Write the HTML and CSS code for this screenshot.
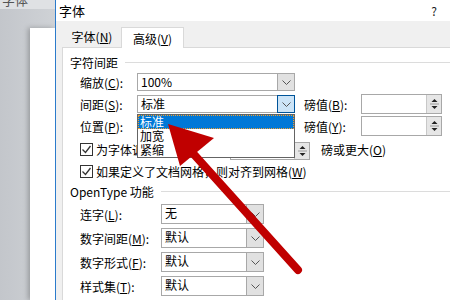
FILE: index.html
```html
<!DOCTYPE html>
<html lang="zh-CN">
<head>
  <meta charset="UTF-8">
  <title>字体</title>
  <link rel="stylesheet" href="styles.css">
</head>
<body>
  <div class="screen">
    <div class="backdrop">
      <div class="ribbon"><span class="ribbon-text">字体</span></div>
      <div class="doc-area"><div class="page"></div></div>
    </div>

    <div class="dialog">
      <div class="titlebar">
        <span class="title">字体</span>
        <span class="help">?</span>
      </div>
      <div class="tabs">
        <div class="tab">字体(<u>N</u>)</div>
        <div class="tab active">高级(<u>V</u>)</div>
      </div>
      <div class="body">
        <div class="panel">
          <div class="group-head"><span>字符间距</span><i class="rule"></i></div>

          <div class="row">
            <span class="lbl w1">缩放(<u>C</u>):</span>
            <div class="combo c1"><span class="val">100%</span><span class="drop"><svg width="9" height="5" viewBox="0 0 9 5"><path d="M0.5 0.5 L4.5 4.5 L8.5 0.5" fill="none" stroke="#555" stroke-width="1"/></svg></span></div>
          </div>

          <div class="row">
            <span class="lbl w1">间距(<u>S</u>):</span>
            <div class="combo c1"><span class="val">标准</span><span class="drop focus"><svg width="9" height="5" viewBox="0 0 9 5"><path d="M0.5 0.5 L4.5 4.5 L8.5 0.5" fill="none" stroke="#555" stroke-width="1"/></svg></span></div>
            <span class="lbl w2">磅值(<u>B</u>):</span>
            <div class="spin s1"><span class="val"></span><span class="arrows"><svg width="13" height="16" viewBox="0 0 13 16"><path d="M3.5 6 L6.5 3 L9.5 6 Z" fill="#222"/><line x1="2" y1="8" x2="11" y2="8" stroke="#9a9a9a"/><path d="M3.5 10 L9.5 10 L6.5 13 Z" fill="#222"/></svg></span></div>
          </div>

          <div class="row">
            <span class="lbl w1">位置(<u>P</u>):</span>
            <div class="combo c1"><span class="val"></span><span class="drop"><svg width="9" height="5" viewBox="0 0 9 5"><path d="M0.5 0.5 L4.5 4.5 L8.5 0.5" fill="none" stroke="#555" stroke-width="1"/></svg></span></div>
            <span class="lbl w2">磅值(<u>Y</u>):</span>
            <div class="spin s1"><span class="val"></span><span class="arrows"><svg width="13" height="16" viewBox="0 0 13 16"><path d="M3.5 6 L6.5 3 L9.5 6 Z" fill="#222"/><line x1="2" y1="8" x2="11" y2="8" stroke="#9a9a9a"/><path d="M3.5 10 L9.5 10 L6.5 13 Z" fill="#222"/></svg></span></div>
          </div>

          <div class="row cb-row first">
            <span class="check"><svg width="11" height="11" viewBox="0 0 11 11"><path d="M1.5 5.5 L4.5 8.5 L9.5 2" fill="none" stroke="#333" stroke-width="1.3"/></svg></span>
            <span class="cb-text">为字体调整字间距(<u>K</u>):</span>
            <div class="spin s2"><span class="val">1</span><span class="arrows"><svg width="13" height="16" viewBox="0 0 13 16"><path d="M3.5 6 L6.5 3 L9.5 6 Z" fill="#222"/><line x1="2" y1="8" x2="11" y2="8" stroke="#9a9a9a"/><path d="M3.5 10 L9.5 10 L6.5 13 Z" fill="#222"/></svg></span></div>
            <span class="after">磅或更大(<u>O</u>)</span>
          </div>

          <div class="row cb-row">
            <span class="check"><svg width="11" height="11" viewBox="0 0 11 11"><path d="M1.5 5.5 L4.5 8.5 L9.5 2" fill="none" stroke="#333" stroke-width="1.3"/></svg></span>
            <span>如果定义了文档网格，则对齐到网格(<u>W</u>)</span>
          </div>

          <div class="group-head second"><span>OpenType 功能</span><i class="rule"></i></div>

          <div class="row ot">
            <span class="lbl w3">连字(<u>L</u>):</span>
            <div class="combo c2"><span class="val">无</span><span class="drop"><svg width="9" height="5" viewBox="0 0 9 5"><path d="M0.5 0.5 L4.5 4.5 L8.5 0.5" fill="none" stroke="#555" stroke-width="1"/></svg></span></div>
          </div>
          <div class="row ot">
            <span class="lbl w3">数字间距(<u>M</u>):</span>
            <div class="combo c2"><span class="val">默认</span><span class="drop"><svg width="9" height="5" viewBox="0 0 9 5"><path d="M0.5 0.5 L4.5 4.5 L8.5 0.5" fill="none" stroke="#555" stroke-width="1"/></svg></span></div>
          </div>
          <div class="row ot">
            <span class="lbl w3">数字形式(<u>F</u>):</span>
            <div class="combo c2"><span class="val">默认</span><span class="drop"><svg width="9" height="5" viewBox="0 0 9 5"><path d="M0.5 0.5 L4.5 4.5 L8.5 0.5" fill="none" stroke="#555" stroke-width="1"/></svg></span></div>
          </div>
          <div class="row ot">
            <span class="lbl w3">样式集(<u>T</u>):</span>
            <div class="combo c2"><span class="val">默认</span><span class="drop"><svg width="9" height="5" viewBox="0 0 9 5"><path d="M0.5 0.5 L4.5 4.5 L8.5 0.5" fill="none" stroke="#555" stroke-width="1"/></svg></span></div>
          </div>
        </div>
      </div>
    </div>

    <!-- open list of the 间距 combo -->
    <div class="droplist">
      <div class="item selected">标准</div>
      <div class="item">加宽</div>
      <div class="item">紧缩</div>
    </div>

    <svg class="arrow" width="450" height="300" viewBox="0 0 450 300">
      <line x1="298" y1="270" x2="190" y2="150" stroke="#c00000" stroke-width="8" stroke-linecap="round"/>
      <polygon points="168,124 214,138 180,166" fill="#c00000"/>
    </svg>
  </div>
</body>
</html>
```

FILE: styles.css
```css
body {
  margin: 0;
  font-family: "Noto Sans CJK SC", "Noto Sans", sans-serif;
  font-size: 12px;
  color: #000;
}
u {
  text-decoration: underline;
  text-underline-offset: 1px;
}
.screen {
  position: relative;
  width: 450px;
  height: 300px;
  overflow: hidden;
  display: flex;
}

/* word window behind the dialog */
.backdrop {
  width: 55px;
  display: flex;
  flex-direction: column;
  background-color: #c8cbd0;
}
.ribbon {
  height: 9px;
  background-color: #dfe1e4;
  overflow: hidden;
  padding-left: 2px;
}
.ribbon-text {
  display: block;
  margin-top: -8px;
  font-size: 13px;
  line-height: 16px;
  color: #555;
}
.doc-area {
  flex: 1;
  padding-top: 19px;
  padding-left: 30px;
  background: linear-gradient(90deg, #c3c6cb, #cfd2d6);
}
.page {
  height: 100%;
  background-color: #fff;
  box-shadow: -2px 0 5px rgba(0,0,0,0.25);
}

/* dialog */
.dialog {
  flex: 1;
  border-left: 1px solid #2b7bcb;
  display: flex;
  flex-direction: column;
  background-color: #f0f0f0;
}
.titlebar {
  height: 21px;
  background-color: #fff;
  display: flex;
  align-items: center;
  justify-content: space-between;
  padding: 0 13px 0 3px;
}
.title {
  font-size: 13px;
}
.help {
  font-size: 12px;
  color: #222;
}
.tabs {
  height: 26px;
  display: flex;
  align-items: flex-end;
  padding-left: 7px;
}
.tab {
  width: 58px;
  height: 20px;
  display: flex;
  align-items: center;
  justify-content: center;
  padding-bottom: 1px;
}
.tab.active {
  width: 61px;
  height: 20px;
  background-color: #fff;
  border: 1px solid #d9d9d9;
  border-bottom: none;
  margin-bottom: -1px;
  position: relative;
  z-index: 1;
  padding-bottom: 0;
}
.body {
  flex: 1;
  padding-left: 6px;
}
.panel {
  height: 100%;
  background-color: #fff;
  border-left: 1px solid #d9d9d9;
  border-top: 1px solid #d9d9d9;
  padding-top: 5px;
  display: flex;
  flex-direction: column;
}
.group-head {
  height: 18px;
  display: flex;
  align-items: center;
  padding-left: 7px;
  flex-shrink: 0;
}
.group-head .rule {
  flex: 1;
  height: 1px;
  margin-left: 7px;
  background-color: #dcdcdc;
}
.group-head.second {
  height: 21px;
}
.row {
  height: 22px;
  display: flex;
  align-items: center;
  padding-left: 17px;
  flex-shrink: 0;
}
.row.ot {
  height: 24px;
}
.lbl {
  flex-shrink: 0;
  white-space: nowrap;
}
.w1 { width: 57px; }
.w2 { width: 57px; margin-left: 9px; }
.w3 { width: 81px; }

.combo, .spin {
  height: 18px;
  box-sizing: border-box;
  border: 1px solid #a8a8a8;
  background-color: #fff;
  display: flex;
  align-items: stretch;
  flex-shrink: 0;
}
.combo.c1 { width: 158px; }
.combo.c2 { width: 103px; height: 20px; }
.combo .val, .spin .val {
  flex: 1;
  padding-left: 3px;
  line-height: 16px;
  overflow: hidden;
}
.drop {
  width: 16px;
  background-color: #e1e1e1;
  border-left: 1px solid #a8a8a8;
  display: flex;
  align-items: center;
  justify-content: center;
}
.drop.focus {
  background-color: #cce4f7;
  border: 1px solid #005499;
  margin: -1px -1px -1px 0;
}
.spin.s1 { width: 81px; height: 20px; }
.spin.s2 { width: 80px; height: 18px; margin-top: 3px; }
.arrows {
  width: 14px;
  background-color: #e6e6e6;
  border-left: 1px solid #c8c8c8;
  display: flex;
  align-items: center;
  justify-content: center;
}

.cb-row {
  height: 20px;
}
.cb-row.first {
  height: 24px;
}
.check {
  width: 13px;
  height: 13px;
  box-sizing: border-box;
  border: 1px solid #333;
  display: flex;
  align-items: center;
  justify-content: center;
  margin-right: 3px;
  flex-shrink: 0;
}
.cb-text {
  width: 134px;
  white-space: nowrap;
  overflow: hidden;
}
.after {
  margin-left: 11px;
}

/* open dropdown list */
.droplist {
  position: absolute;
  left: 137px;
  top: 114px;
  width: 158px;
  height: 44px;
  box-sizing: border-box;
  border: 1px solid #646464;
  background-color: #fff;
}
.item {
  height: 14px;
  line-height: 14px;
  padding-left: 2px;
}
.item.selected {
  background-color: #0078d7;
  color: #fff;
  outline: 1px dotted #f0a030;
  outline-offset: -1px;
}

.arrow {
  position: absolute;
  left: 0;
  top: 0;
  pointer-events: none;
}
```
